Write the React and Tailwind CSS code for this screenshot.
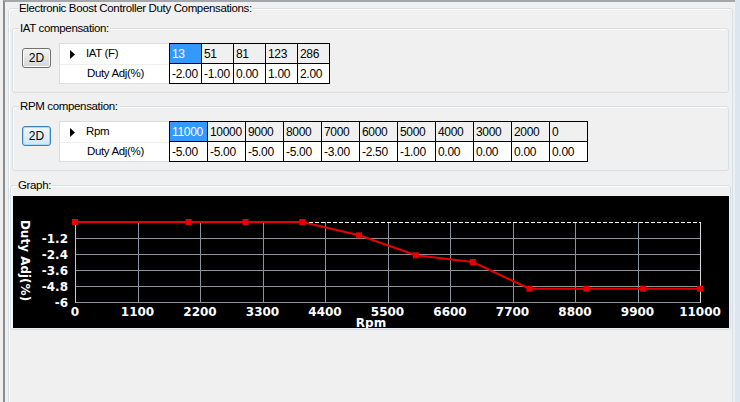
import clsx from "clsx";

const iatAxis = ["13", "51", "81", "123", "286"];
const iatDuty = ["-2.00", "-1.00", "0.00", "1.00", "2.00"];
const rpmAxis = ["11000", "10000", "9000", "8000", "7000", "6000", "5000", "4000", "3000", "2000", "0"];
const rpmDuty = ["-5.00", "-5.00", "-5.00", "-5.00", "-3.00", "-2.50", "-1.00", "0.00", "0.00", "0.00", "0.00"];

const font = { fontFamily: '"Liberation Sans", Arial, sans-serif' };

const GroupBox = ({ title, className, children }) => (
  <fieldset
    className={clsx(
      "rounded-[3px] border border-[#d5dfe5] shadow-[inset_1px_1px_0_#ffffff]",
      className
    )}
  >
    <legend className="ml-[6px] bg-[#f0f0f0] px-[1px] text-[11.5px] leading-[13px] tracking-[-0.35px] text-black">
      {title}
    </legend>
    {children}
  </fieldset>
);

const Button2D = ({ focused }) => (
  <button
    className={clsx(
      "mt-[5px] h-[20px] w-[29px] rounded-[3px] border bg-linear-to-b text-[12px] leading-none text-black",
      focused
        ? "border-[#3c7fb1] from-[#eef7fd] to-[#cfe6f5] shadow-[inset_0_0_0_1px_#a8d8f6]"
        : "border-[#707070] from-[#f3f3f3] to-[#d6d6d6] shadow-[inset_0_0_0_1px_#fbfbfb]"
    )}
  >
    2D
  </button>
);

const Arrow = () => (
  <svg width="5" height="9" viewBox="0 0 5 9" className="block">
    <path d="M0 0 L5 4.5 L0 9 Z" fill="#000" />
  </svg>
);

const DataGrid = ({ axisLabel, axis, values, cellW }) => (
  <div className="flex">
    {/* row headers */}
    <div className="flex h-[41px] w-[110px] flex-col border border-r-0 border-[#dcdcdc] bg-white text-[11.5px] tracking-[-0.35px]">
      <div className="flex h-[20px] items-center">
        <div className="flex w-[24px] justify-center pl-[1px]">
          <Arrow />
        </div>
        <span className="pl-[2px]">{axisLabel}</span>
      </div>
      <div className="flex h-[19px] items-center border-t border-[#efefef]">
        <div className="w-[24px]" />
        <span className="pl-[3px]">Duty Adj(%)</span>
      </div>
    </div>
    {/* cells */}
    <div className="border-l border-t border-black text-[12px] tracking-[-0.3px]">
      <div className="flex">
        {axis.map((a, i) => (
          <div
            key={i}
            className={clsx(
              "flex h-[20px] items-center border-b border-r border-black pl-[2px]",
              cellW,
              i === 0 ? "bg-[#3399ff] text-white" : "bg-[#f0f0f0] text-black"
            )}
          >
            {a}
          </div>
        ))}
      </div>
      <div className="flex">
        {values.map((v, i) => (
          <div
            key={i}
            className={clsx(
              "flex h-[20px] items-center border-b border-r border-black bg-white pl-[2px] text-black",
              cellW
            )}
          >
            {v}
          </div>
        ))}
      </div>
    </div>
  </div>
);

const Chart = () => {
  const X0 = 62;
  const X1 = 687;
  const Y0 = 26;
  const Y1 = 106;
  const xs = (v) => X0 + (v / 11000) * (X1 - X0);
  const ys = (v) => Y0 + (-v / 6) * (Y1 - Y0);
  const pts = rpmAxis
    .map((r, i) => [Number(r), Number(rpmDuty[i])])
    .sort((a, b) => a[0] - b[0]);
  const line = pts.map(([r, d]) => `${xs(r).toFixed(1)},${ys(d).toFixed(1)}`).join(" ");
  const label = {
    fill: "#ffffff",
    fontFamily: '"DejaVu Sans", Verdana, sans-serif',
    fontWeight: "bold",
    fontSize: 12,
  };

  return (
    <svg width="716" height="132" viewBox="0 0 716 132" className="block">
      <rect width="716" height="132" fill="#000" />
      {/* horizontal grid */}
      {[1, 2, 3, 4, 5].map((j) => (
        <line
          key={j}
          x1={X0}
          x2={X1}
          y1={Y0 + j * 16 + 0.5}
          y2={Y0 + j * 16 + 0.5}
          stroke="#8a939e"
          strokeWidth="1"
        />
      ))}
      {/* vertical grid */}
      {[1, 2, 3, 4, 5, 6, 7, 8, 9].map((i) => (
        <line
          key={i}
          x1={Math.round(X0 + i * 62.5) + 0.5}
          x2={Math.round(X0 + i * 62.5) + 0.5}
          y1={Y0}
          y2={Y1}
          stroke="#8a939e"
          strokeWidth="1"
        />
      ))}
      <line x1={X0 + 0.5} x2={X0 + 0.5} y1={Y0} y2={Y1 + 1} stroke="#c8c8c8" />
      <line x1={X1 + 0.5} x2={X1 + 0.5} y1={Y0} y2={Y1 + 1} stroke="#d8d8d8" />
      <line x1={X0} x2={X1 + 1} y1={Y0 + 0.5} y2={Y0 + 0.5} stroke="#ffffff" strokeDasharray="4 2" />
      {/* data */}
      <polyline points={line} fill="none" stroke="#e60000" strokeWidth="2" />
      {pts.map(([r, d], i) => (
        <rect key={i} x={xs(r) - 3} y={ys(d) - 3} width="6" height="6" fill="#e60000" />
      ))}
      {/* y labels */}
      {["-1.2", "-2.4", "-3.6", "-4.8", "-6"].map((t, j) => (
        <text key={t} x="55" y={Y0 + (j + 1) * 16 + 4.5} textAnchor="end" style={label}>
          {t}
        </text>
      ))}
      {/* x labels */}
      {[0, 1100, 2200, 3300, 4400, 5500, 6600, 7700, 8800, 9900, 11000].map((v) => (
        <text key={v} x={xs(v)} y="120" textAnchor="middle" style={label}>
          {v}
        </text>
      ))}
      <text x="358" y="131" textAnchor="middle" style={label}>
        Rpm
      </text>
      <text transform="translate(8 64.5) rotate(90)" textAnchor="middle" style={label}>
        Duty Adj(%)
      </text>
    </svg>
  );
};

export default function App() {
  return (
    <div className="flex h-[402px] w-[740px] overflow-hidden bg-[#f0f0f0] text-black" style={font}>
      <div className="ml-[3px] flex-1 border-l-2 border-t-2 border-l-[#8d8d8d] border-t-[#a3a7ab]">
        <div className="ml-[3px] mr-[2px]">
          <GroupBox title="Electronic Boost Controller Duty Compensations:" className="h-[430px] px-[3px]">
            <div className="pt-[7px]">
              <GroupBox title="IAT compensation:">
                <div className="flex gap-[8px] pb-[8px] pl-[9px] pt-[8px]">
                  <Button2D />
                  <DataGrid axisLabel="IAT (F)" axis={iatAxis} values={iatDuty} cellW="w-[32px]" />
                </div>
              </GroupBox>

              <GroupBox title="RPM compensation:" className="mt-[7px]">
                <div className="flex gap-[8px] pb-[8px] pl-[9px] pt-[8px]">
                  <Button2D focused />
                  <DataGrid axisLabel="Rpm" axis={rpmAxis} values={rpmDuty} cellW="w-[38px]" />
                </div>
              </GroupBox>

              <GroupBox title="Graph:" className="-mx-[2px] mt-[8px]">
                <div className="pb-[1px] pl-[2px] pt-[4px]">
                  <Chart />
                </div>
              </GroupBox>
            </div>
          </GroupBox>
        </div>
      </div>
      <div className="w-[5px] bg-[#dde6ee]" />
    </div>
  );
}
